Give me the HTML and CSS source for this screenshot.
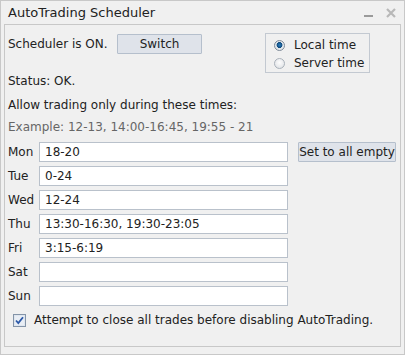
FILE: index.html
```html
<!DOCTYPE html>
<html>
<head>
<meta charset="utf-8">
<link rel="stylesheet" href="styles.css">
</head>
<body>
<div class="window">
  <div class="titlebar">
    <span class="title">AutoTrading Scheduler</span>
    <span class="controls">
      <svg class="min" width="10" height="10" viewBox="0 0 10 10"><rect x="0" y="7" width="9" height="2" fill="#9a9a9a"/></svg>
      <svg class="close" width="10" height="10" viewBox="0 0 10 10"><path d="M1 1 L9 9 M9 1 L1 9" stroke="#b8b8b8" stroke-width="2.2"/></svg>
    </span>
  </div>
  <div class="panel">
    <div class="top">
      <div class="topleft">
        <div class="schedline"><span class="schedtext">Scheduler is ON.</span><button class="btn switch">Switch</button></div>
        <div class="status">Status: OK.</div>
      </div>
      <div class="radiobox">
        <label class="radio"><span class="rdot checked"></span>Local time</label>
        <label class="radio"><span class="rdot"></span>Server time</label>
      </div>
    </div>
    <div class="allow">Allow trading only during these times:</div>
    <div class="example">Example: 12-13, 14:00-16:45, 19:55 - 21</div>
    <div class="days">
      <div class="day"><span class="dname">Mon</span><div class="inp">18-20</div><button class="btn setall">Set to all empty</button></div>
      <div class="day"><span class="dname">Tue</span><div class="inp">0-24</div></div>
      <div class="day"><span class="dname">Wed</span><div class="inp">12-24</div></div>
      <div class="day"><span class="dname">Thu</span><div class="inp">13:30-16:30, 19:30-23:05</div></div>
      <div class="day"><span class="dname">Fri</span><div class="inp">3:15-6:19</div></div>
      <div class="day"><span class="dname">Sat</span><div class="inp"></div></div>
      <div class="day"><span class="dname">Sun</span><div class="inp"></div></div>
    </div>
    <div class="check">
      <svg class="cbox" width="13" height="13" viewBox="0 0 13 13">
        <rect x="0.5" y="0.5" width="12" height="12" fill="#dfe6ef" stroke="#8494a8"/>
        <rect x="2" y="2" width="9" height="9" fill="#e9eef5"/>
        <path d="M3 6.5 L5.3 9 L10 3.2" stroke="#2c59a8" stroke-width="1.8" fill="none"/>
      </svg>
      <span>Attempt to close all trades before disabling AutoTrading.</span>
    </div>
  </div>
</div>
</body>
</html>
```
FILE: styles.css
```css
* { box-sizing: border-box; }
html, body { margin: 0; padding: 0; background: #f0f0f0; }
body {
  font-family: Tahoma, "DejaVu Sans", sans-serif;
  font-size: 12px;
  color: #222;
}
.window {
  width: 405px;
  height: 355px;
  border: 1px solid #c8c8c8;
  background: #f0f0f0;
  display: flex;
  flex-direction: column;
}
.titlebar {
  height: 23px;
  display: flex;
  align-items: center;
  justify-content: space-between;
  padding: 0 8px 0 7px;
  flex: none;
}
.title { font-size: 13px; color: #222; }
.controls { display: flex; gap: 12px; align-items: center; }
.panel {
  flex: 1;
  margin: 0 3px 7px 3px;
  border: 1px solid #c8c8c8;
  padding: 0 3px;
  display: flex;
  flex-direction: column;
}
.top { display: flex; justify-content: space-between; margin-top: 8px; }
.topleft { display: flex; flex-direction: column; }
.schedline { display: flex; align-items: center; margin-top: 1px; height: 20px; }
.schedtext { width: 109px; }
.btn {
  font: inherit;
  color: #222;
  background: #dfe3ea;
  border: 1px solid #b5bfcc;
  border-radius: 1px;
  padding: 0;
  height: 20px;
}
.switch { width: 85px; }
.status { margin-top: 20px; line-height: 14px; }
.radiobox {
  width: 105px;
  height: 40px;
  border: 1px solid #c3c9d1;
  margin-right: 27px;
  padding: 2px 0 0 8px;
  display: flex;
  flex-direction: column;
}
.radio { display: flex; align-items: center; height: 18px; }
.rdot {
  width: 11px; height: 11px; border-radius: 50%;
  border: 1px solid #a9b1ba;
  background: radial-gradient(circle at 50% 40%, #fdfdfd 0%, #e5e7ea 70%, #d4d7db 100%);
  margin-right: 9px;
}
.rdot.checked {
  border-color: #7e8a98;
  background: radial-gradient(circle at 50% 45%, #2a7fc0 0%, #104a7c 40%, #dfe5ea 48%, #eef0f2 100%);
}
.allow { margin-top: 9px; line-height: 16px; }
.example { margin-top: 6px; line-height: 16px; color: #666; }
.days { margin-top: 7px; display: flex; flex-direction: column; gap: 4px; }
.day { display: flex; align-items: center; height: 20px; }
.dname { width: 31px; }
.inp {
  width: 249px;
  height: 20px;
  background: #fff;
  border: 1px solid #b9c1cb;
  padding: 0 5px;
  line-height: 18px;
}
.setall { width: 98px; margin-left: 10px; }
.check { display: flex; align-items: center; margin-top: 7px; height: 14px; padding-left: 5px; }
.cbox { margin-right: 8px; }
```
